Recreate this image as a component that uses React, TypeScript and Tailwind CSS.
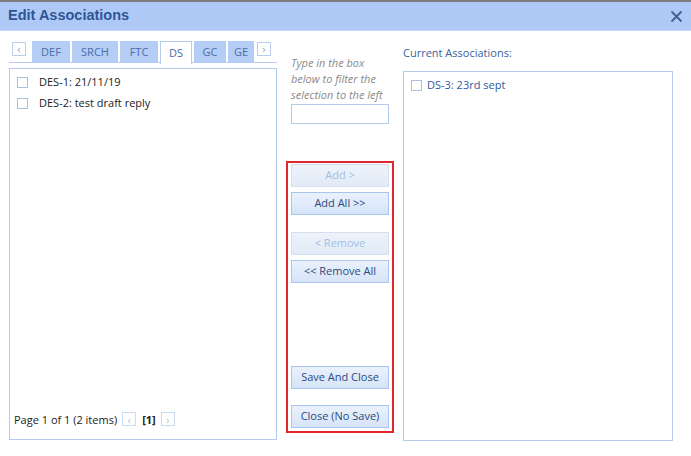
import React from "react";

const leftItems = ["DES-1: 21/11/19", "DES-2: test draft reply"];
const tabs = [
  { label: "DEF", w: "w-[38px]" },
  { label: "SRCH", w: "w-[46px]" },
  { label: "FTC", w: "w-[38px]" },
  { label: "DS", w: "w-[32px]", active: true },
  { label: "GC", w: "w-[32px]" },
  { label: "GE", w: "w-[26px]" },
];

function Box() {
  return <span className="inline-block w-[11px] h-[11px] border border-[#a8c2e6] bg-white shrink-0" />;
}

function Arrow({ dir, faded }: { dir: "l" | "r"; faded?: boolean }) {
  return (
    <span
      className={`inline-flex items-center justify-center w-[14px] h-[14px] border ${
        faded ? "border-[#c9daf3] text-[#a9c3ea]" : "border-[#b9cfee] text-[#8fa6c8]"
      } bg-white text-[11px] leading-none`}
    >
      {dir === "l" ? "‹" : "›"}
    </span>
  );
}

function Btn({ label, disabled }: { label: string; disabled?: boolean }) {
  return (
    <button
      className={`w-[98px] h-[23px] border text-[11px] bg-gradient-to-b ${
        disabled
          ? "border-[#d5e0ef] from-[#eef3fb] to-[#e1eaf7] text-[#a3bde2]"
          : "border-[#a9c5ee] from-[#eaf1fc] to-[#d6e4f8] text-[#2c4a7e]"
      }`}
    >
      {label}
    </button>
  );
}

export default function App() {
  return (
    <div className="w-[691px] h-[456px] bg-white overflow-hidden font-['Open_Sans',sans-serif] text-[11px]">
      <div className="h-[2px] bg-[#7d7d7d]" />
      <div className="h-[29px] bg-[#aec9f5] flex items-center justify-between pl-[8px] pr-[8px] border-b border-[#c3d6f5]">
        <span className="font-['Liberation_Sans',sans-serif] font-bold text-[14.5px] text-[#2e5597]">Edit Associations</span>
        <svg width="13" height="13" viewBox="0 0 13 13">
          <path d="M1.5 1.5 L11.5 11.5 M11.5 1.5 L1.5 11.5" stroke="#3f5f95" strokeWidth="1.8" />
        </svg>
      </div>

      <div className="flex items-start">
        {/* left */}
        <div className="ml-[9px] w-[268px] pt-[10px]">
          <div className="flex items-start h-[22px] border-b border-[#b7cdee]">
            <span className="ml-[3px]"><Arrow dir="l" /></span>
            <div className="flex ml-[6px] gap-[2px]">
              {tabs.map((t) => (
                <div
                  key={t.label}
                  className={`${t.w} h-[22px] flex items-center justify-center overflow-hidden text-[#4b6ea8] ${
                    t.active ? "bg-white border border-b-0 border-[#b7cdee] h-[23px]" : "bg-[#b3cdf4]"
                  }`}
                >
                  {t.label}
                </div>
              ))}
            </div>
            <span className="ml-[3px]"><Arrow dir="r" /></span>
          </div>
          <div className="mt-[5px] h-[372px] border border-[#b3cbec] flex flex-col">
            <div className="pt-[6px] pl-[7px] flex flex-col gap-[7px]">
              {leftItems.map((it) => (
                <div key={it} className="flex items-center gap-[11px] h-[14px] text-[#222]">
                  <Box />
                  <span>{it}</span>
                </div>
              ))}
            </div>
            <div className="mt-auto mb-[11px] ml-[4px] flex items-center text-[#222]">
              <span>Page 1 of 1 (2 items)</span>
              <span className="ml-[5px]"><Arrow dir="l" faded /></span>
              <span className="ml-[6px] font-bold">[1]</span>
              <span className="ml-[5px]"><Arrow dir="r" faded /></span>
            </div>
          </div>
        </div>

        {/* middle */}
        <div className="ml-[9px] w-[108px] pt-[24px]">
          <p className="pl-[5px] italic text-[#8a8a8a] leading-[16px]">
            Type in the box
            <br />
            below to filter the
            <br />
            selection to the left
          </p>
          <div className="ml-[5px] mt-[1px] w-[98px] h-[20px] border border-[#b3cbec]" />
          <div className="mt-[37px] h-[272px] border-2 border-[#e3262b] flex flex-col items-center pt-[1px] pb-[3px]">
            <Btn label="Add >" disabled />
            <div className="mt-[5px]"><Btn label="Add All >>" /></div>
            <div className="mt-[17px]"><Btn label="< Remove" disabled /></div>
            <div className="mt-[5px]"><Btn label="<< Remove All" /></div>
            <div className="mt-auto"><Btn label="Save And Close" /></div>
            <div className="mt-[16px]"><Btn label="Close (No Save)" /></div>
          </div>
        </div>

        {/* right */}
        <div className="ml-[9px] w-[270px] pt-[14px]">
          <div className="text-[#3a5f9c] leading-[16px]">Current Associations:</div>
          <div className="mt-[10px] h-[370px] border border-[#b3cbec] pt-[6px] pl-[7px]">
            <div className="flex items-center gap-[5px] h-[14px] text-[#2d5aa0]">
              <Box />
              <span>DS-3: 23rd sept</span>
            </div>
          </div>
        </div>
      </div>
    </div>
  );
}
